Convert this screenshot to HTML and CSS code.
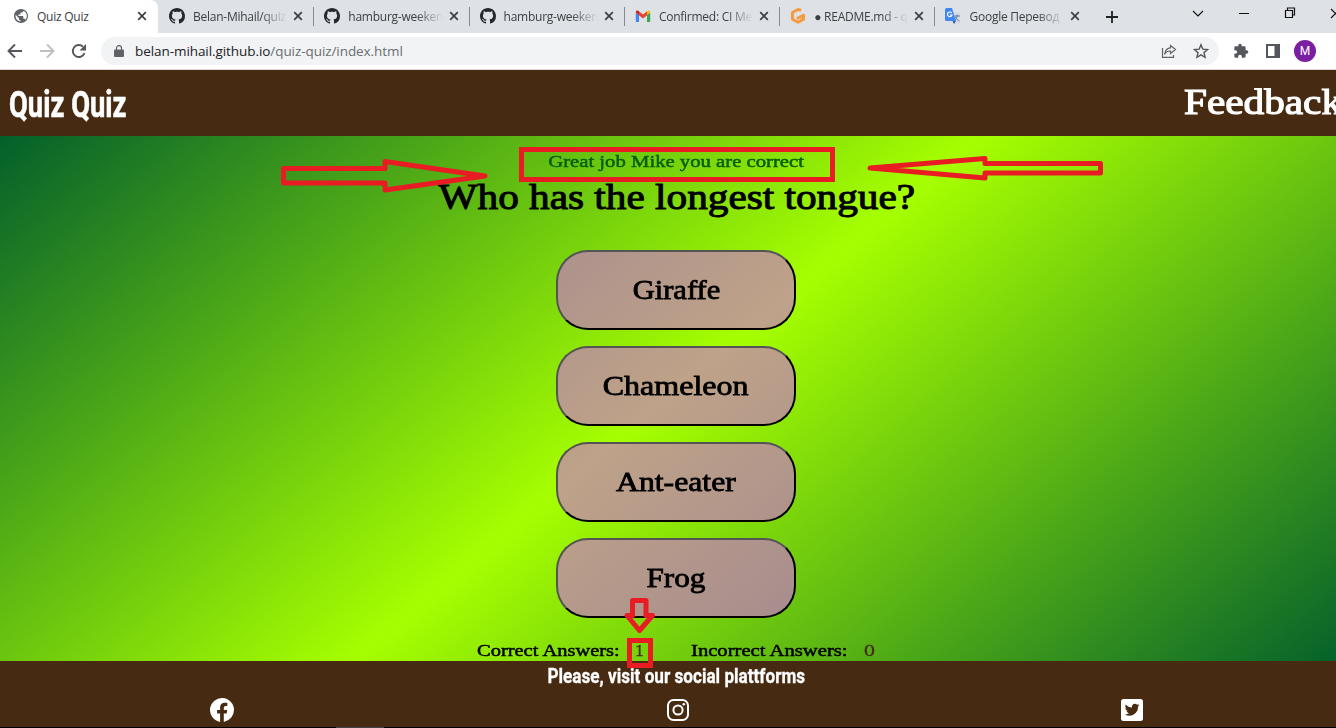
FILE: index.html
```
<!DOCTYPE html>
<html lang="en">
<head>
<meta charset="utf-8">
<title>Quiz Quiz</title>
<link rel="stylesheet" href="styles.css">
</head>
<body>
<svg class="defs" width="0" height="0" aria-hidden="true">
  <symbol id="github" viewBox="0 0 16 16"><path fill="#24292f" d="M8 0C3.58 0 0 3.58 0 8c0 3.54 2.29 6.53 5.47 7.59.4.07.55-.17.55-.38 0-.19-.01-.82-.01-1.49-2.01.37-2.53-.49-2.69-.94-.09-.23-.48-.94-.82-1.13-.28-.15-.68-.52-.01-.53.63-.01 1.08.58 1.23.82.72 1.21 1.87.87 2.33.66.07-.52.28-.87.51-1.07-1.78-.2-3.64-.89-3.64-3.95 0-.87.31-1.59.82-2.15-.08-.2-.36-1.02.08-2.12 0 0 .67-.21 2.2.82.64-.18 1.32-.27 2-.27s1.36.09 2 .27c1.53-1.04 2.2-.82 2.2-.82.44 1.1.16 1.92.08 2.12.51.56.82 1.27.82 2.15 0 3.07-1.87 3.75-3.65 3.95.29.25.54.73.54 1.48 0 1.07-.01 1.93-.01 2.2 0 .21.15.46.55.38A8.01 8.01 0 0 0 16 8c0-4.42-3.58-8-8-8z"/></symbol>
  <symbol id="close" viewBox="0 0 10 10"><path d="M1.2 1.2l7.6 7.6M8.8 1.2L1.2 8.8" stroke="#3c4043" stroke-width="1.7"/></symbol>
</svg>

<div class="browser">
  <div class="tabs">
    <div class="tab active">
      <svg class="fav" viewBox="0 0 24 24"><path fill="#5f6368" d="M12 0C5.4 0 0 5.4 0 12s5.400 12 12 12 12-5.400 12-12S18.600 0 12 0zM11 21.400C6.200 20.800 2.600 16.800 2.600 12l.2-2 5.700 5.700V17c0 1.300 1.100 2.400 2.500 2.400zm8.500-3c-.3-1-1.200-1.700-2.300-1.700H16v-3.500c0-.7-.5-1.200-1.200-1.200H7.500V9.600H10c.7 0 1.200-.5 1.200-1.200V6h2.500C15 6 16 5 16 3.600v-.5c3.500 1.400 6 4.900 6 8.900 0 2.500-1 4.800-2.500 6.400z"/></svg>
      <span class="title">Quiz Quiz</span><svg class="x"><use href="#close"/></svg>
    </div>
    <div class="tab"><svg class="fav"><use href="#github"/></svg><span class="title">Belan-Mihail/quiz</span><svg class="x"><use href="#close"/></svg></div>
    <div class="tab"><svg class="fav"><use href="#github"/></svg><span class="title">hamburg-weeken</span><svg class="x"><use href="#close"/></svg></div>
    <div class="tab"><svg class="fav"><use href="#github"/></svg><span class="title">hamburg-weeken</span><svg class="x"><use href="#close"/></svg></div>
    <div class="tab">
      <svg class="fav" viewBox="0 0 16 16"><path fill="#4285f4" d="M1 14h3V7L.8 4.500V13z"/><path fill="#34a853" d="M12 14h3l.2-1V4.500L12 7z"/><path fill="#ea4335" d="M3.500 3L8 6.500 12.500 3v4L8 10.400 3.500 7z"/><path fill="#c5221f" d="M.8 4.500C.8 2.500 2.500 2 4 3.300V7L.8 4.600z"/><path fill="#fbbc04" d="M15.200 4.500c0-2-1.700-2.500-3.200-1.200V7l3.200-2.400z"/></svg>
      <span class="title">Confirmed: CI Me</span><svg class="x"><use href="#close"/></svg>
    </div>
    <div class="tab">
      <svg class="fav" viewBox="0 0 16 16"><path d="M10 2L8 1.500 2.500 4.500v6.700L8 14.300l5.500-3.100V7.300L8 10" fill="none" stroke="#f7993c" stroke-width="3" stroke-linejoin="round" stroke-linecap="round"/></svg>
      <span class="title">● README.md - q</span><svg class="x"><use href="#close"/></svg>
    </div>
    <div class="tab">
      <svg class="fav" viewBox="0 0 16 16"><path fill="#d8dadf" d="M7 4h8v12H9z"/><path d="M9.500 8h5.500M12 6.500V8c0 2-1 4-2.500 5M10.500 9c1 2 2.500 3.500 4 4" stroke="#657ba0" fill="none"/><path fill="#4285f4" d="M0 1.500Q0 0 1.500 0H7l4 13H1.500Q0 13 0 11.500z"/><path fill="#3459b5" d="M7.500 13H11l-2 3z"/><path d="M6.700 5A2.300 2.300 0 1 0 7 7H5" stroke="#fff" stroke-width="1.200" fill="none"/></svg>
      <span class="title">Google Перевод</span><svg class="x"><use href="#close"/></svg>
    </div>
    <svg class="plus" viewBox="0 0 12 12"><path d="M6 0v12M0 6h12" stroke="#202124" stroke-width="1.800"/></svg>
    <svg class="window-controls" viewBox="0 0 150 26" fill="none" stroke="#111" stroke-width="1.200"><path d="M7 11l5 5 5-5M53 13.500h10M99.500 10.500h7v7h-7zM101.500 10v-2h7v7h-2M145 9l9 9M145 18l9-9"/></svg>
  </div>
  <div class="toolbar">
    <svg class="nav" viewBox="0 0 100 36" fill="none" stroke="#54575b" stroke-width="1.900"><path d="M22 18H9M15 11.500L8.500 18l6.500 6.500"/><path stroke="#bdbfc2" d="M40 18h13M47 11.500l6.500 6.500-6.500 6.500"/><path d="M84.500 20A6 6 0 1 1 83 13.700"/><path fill="#54575b" stroke="none" d="M86 11v6.500h-6.500z"/></svg>
    <div class="address">
      <svg class="lock" viewBox="0 0 10 12"><path fill="#5f6368" d="M1 4.500h8q1 0 1 1V11q0 1-1 1H1q-1 0-1-1V5.500q0-1 1-1z"/><path d="M2.500 5V3a2.500 2.300 0 0 1 5 0v2" fill="none" stroke="#5f6368" stroke-width="1.200"/></svg>
      <span class="url"><b>belan-mihail.github.io</b>/quiz-quiz/index.html</span>
      <svg class="share" viewBox="0 0 16 16" fill="none" stroke="#5f6368" stroke-width="1.200"><path d="M1.500 5v9.400h11V12M9.500 2.500L14.500 6.500 9.500 10.500V8C6.500 8 4.500 9 3.500 11.500 4 7.500 6 5 9.500 4.800z"/></svg>
      <svg class="star" viewBox="0 0 16 16" fill="none" stroke="#54575b" stroke-width="1.400"><path d="M8 1.700l1.800 4.400 4.800.4-3.600 3.100 1.100 4.700L8 11.800l-4.100 2.500L5 9.600 1.400 6.500l4.800-.4z"/></svg>
    </div>
    <svg class="puzzle" viewBox="0 0 24 24"><path fill="#54575b" d="M20.500 11H19V7a2 2 0 0 0-2-2h-4V3.500a2.500 2.500 0 0 0-5 0V5H4a2 2 0 0 0-2 2v3.800h1.500a2.700 2.700 0 0 1 0 5.400H2V20a2 2 0 0 0 2 2h3.800v-1.500a2.700 2.700 0 0 1 5.400 0V22H17a2 2 0 0 0 2-2v-4h1.500a2.500 2.500 0 0 0 0-5z"/></svg>
    <svg class="panel" viewBox="0 0 14 14"><path fill="#54575b" fill-rule="evenodd" d="M0 0h14v14H0zM2 2v10h6.500V2z"/></svg>
    <span class="avatar">M</span>
  </div>
</div>

<header class="header">
  <h1 class="logo">Quiz Quiz</h1>
  <a class="feedback">Feedback</a>
</header>

<main class="quiz">
  <p class="message"><span>Great job Mike you are correct</span></p>
  <h2 class="question"><span>Who has the longest tongue?</span></h2>
  <div class="answers">
    <button class="answer"><span class="giraffe">Giraffe</span></button>
    <button class="answer"><span class="chameleon">Chameleon</span></button>
    <button class="answer"><span class="anteater">Ant-eater</span></button>
    <button class="answer"><span class="frog">Frog</span></button>
  </div>
  <div class="scores">
    <span class="label correct">Correct Answers:</span><span class="score">1</span>
    <span class="label incorrect">Incorrect Answers:</span><span class="score last">0</span>
  </div>
</main>

<footer class="footer">
  <p class="visit"><span>Please, visit our social plattforms</span></p>
  <div class="social">
    <svg width="24" height="24" viewBox="0 0 24 24"><path fill="#fff" d="M24 12a12 12 0 1 0-13.900 11.900v-8.400h-3V12h3V9.400c0-3 1.800-4.700 4.500-4.700 1.300 0 2.700.2 2.700.2v3h-1.500c-1.500 0-2 .9-2 1.900V12h3.400l-.5 3.500h-2.900v8.400A12 12 0 0 0 24 12z"/></svg>
    <svg width="22" height="22" viewBox="0 0 22 22" fill="none" stroke="#fff"><rect x="1" y="1" width="20" height="20" rx="5.500" stroke-width="2"/><circle cx="11" cy="11" r="4.600" stroke-width="2"/><circle cx="16.800" cy="5.300" r="1.300" fill="#fff" stroke="none"/></svg>
    <svg width="22" height="22" viewBox="0 0 22 22"><rect width="22" height="22" rx="2.500" fill="#fff"/><path fill="#472a12" d="M18.500 6.200c-.5.3-1.100.4-1.700.5.600-.4 1-.9 1.300-1.600-.6.300-1.200.6-1.900.7a3 3 0 0 0-5.200 2.700C8.500 8.400 6.300 7.200 4.800 5.400a3 3 0 0 0 .9 4c-.5 0-.9-.1-1.300-.4 0 1.500 1 2.700 2.400 3-.4.100-.9.100-1.300 0 .4 1.200 1.500 2 2.800 2.100a6 6 0 0 1-4.500 1.300A8.600 8.600 0 0 0 17 7.800c.6-.4 1.100-1 1.500-1.600z"/></svg>
  </div>
  <div class="taskbar"></div>
</footer>

<svg class="marks" viewBox="0 0 1336 728" fill="none" stroke="#e91c24" stroke-width="5" stroke-linejoin="round">
  <path d="M283.500 168.500H385V161.500L485 176 385 190v-7H283.500z"/>
  <path d="M870 168l115-9.500v5h115.500v9.500H985v5z"/>
  <path stroke-linejoin="miter" d="M521.500 149.500h311v30h-311z"/>
  <path stroke-linejoin="miter" d="M629.500 640.500h21v25h-21z"/>
  <path d="M632.500 600.500h13.500v15h6.500L639.500 630.500 627 615.500h5.500z"/>
</svg>
</body>
</html>
```
FILE: styles.css
```
* { box-sizing: border-box; }
body { margin: 0; width: 1336px; height: 728px; overflow: hidden; position: relative; font-family: "Liberation Serif", serif; }
p, h1, h2 { margin: 0; }
svg { flex: none; display: block; }
.defs { position: absolute; }

.browser { height: 70px; font-family: "Open Sans", sans-serif; border-bottom: 1px solid #dcd5d4; background: #fff; }
.tabs { height: 33px; background: #dee1e6; display: flex; align-items: center; }
.tab { width: 155.300px; height: 33px; padding: 0 10px 1px 11px; display: flex; align-items: center; position: relative; }
.tab + .tab:not(:nth-child(2))::before { content: ""; position: absolute; left: 0; top: 7px; width: 1px; height: 19px; background: #85888d; }
.active { width: 158px; padding-left: 14px; padding-right: 11px; background: #fff; border-radius: 0 8px 0 0; }
.fav { width: 16px; height: 16px; }
.active .fav { width: 14px; height: 14px; }
.title { flex: 1; min-width: 0; margin: 0 4px 0 8px; overflow: hidden; white-space: nowrap; font-size: 12px; letter-spacing: -0.25px; color: #3c4043; mask-image: linear-gradient(90deg, #000 70%, transparent 98%); }
.active .title { margin-left: 9px; mask-image: none; }
.x { width: 10px; height: 10px; }
.plus { width: 12px; height: 12px; margin-left: 16px; }
.window-controls { width: 150px; height: 26px; margin-left: auto; margin-bottom: 7px; overflow: hidden; }
.toolbar { height: 36px; display: flex; align-items: center; }
.nav { width: 100px; height: 36px; }
.address { width: 1118px; height: 28px; margin-left: 1px; padding: 0 10px 0 13px; border-radius: 14px; background: #f1f3f4; display: flex; align-items: center; }
.lock { width: 10px; height: 12px; }
.url { flex: 1; margin-left: 11px; font-size: 13.500px; letter-spacing: -0.07px; color: #6b6e72; }
.url b { font-weight: 400; color: #202124; }
.share { width: 16px; height: 16px; margin-right: 16px; }
.star { width: 16px; height: 16px; }
.puzzle { width: 16px; height: 16px; margin-left: 14px; }
.panel { width: 14px; height: 14px; margin-left: 17px; }
.avatar { width: 22px; height: 22px; margin-left: 14px; border-radius: 50%; background: #7b1fa2; color: #fff; text-align: center; font: 12px/22px Roboto, sans-serif; }

.header { height: 66px; padding-left: 9px; background: #472a12; color: #fff; display: flex; justify-content: space-between; }
.logo { font: 700 36px/70px Roboto, sans-serif; -webkit-text-stroke: 0.6px; transform: scaleX(0.76); transform-origin: left; }
.feedback { width: 152px; font-size: 36.500px; line-height: 64px; -webkit-text-stroke: 1.2px; transform: scaleX(1.13); transform-origin: left; }

.quiz { width: 1352px; height: 525px; padding-top: 14px; background: linear-gradient(140deg, #03602b, #a6ff00 49.500%, #03602b); display: flex; flex-direction: column; align-items: center; }
.quiz > * { flex: none; }
.message { height: 24px; font-size: 17.500px; line-height: 23px; color: #06600a; -webkit-text-stroke: 0.5px; }
.message span { display: inline-block; transform: scaleX(1.183); }
.question { height: 76px; font-size: 36.500px; font-weight: 400; line-height: 46px; -webkit-text-stroke: 1px; }
.question span { display: inline-block; transform: translateX(1px) scaleX(1.13); }
.answers { display: flex; flex-direction: column; gap: 16px; }
.answer { width: 240px; height: 80px; padding: 0; border: 2px outset #000; border-radius: 32px; background: rgba(203, 112, 211, .65); color: #000; font: 27.500px "Liberation Serif", serif; -webkit-text-stroke: 0.8px; }
.answer span { display: inline-block; }
.giraffe { transform: scaleX(1.11); }
.chameleon { transform: scaleX(1.165); }
.anteater { transform: scaleX(1.155); }
.frog { transform: scaleX(1.135); }
.scores { align-self: flex-start; margin: 22px 0 0 477px; display: flex; font-size: 17.500px; line-height: 21px; -webkit-text-stroke: 0.5px; }
.label { width: 142px; white-space: nowrap; transform-origin: left; }
.correct { transform: scaleX(1.17); }
.incorrect { width: 156px; margin-left: 47px; transform: scaleX(1.18); }
.score { width: 9px; margin-left: 16px; color: #472a12; -webkit-text-stroke: 0.3px; }
.last { margin-left: 18px; transform: scaleX(1.25); }

.footer { height: 67px; width: 1352px; background: #472a12; color: #fff; display: flex; flex-direction: column; }
.visit { height: 34px; text-align: center; font: 700 20px/31px Roboto, sans-serif; -webkit-text-stroke: 0.3px; }
.visit span { display: inline-block; transform: scaleX(0.857); }
.social { height: 32px; padding: 0 209px 3px 210px; display: flex; justify-content: space-between; align-items: center; }
.taskbar { height: 1px; background: linear-gradient(90deg, #000 336px, #444 336px 384px, #000 384px); }
.marks { position: absolute; left: 0; top: 0; width: 1336px; height: 728px; pointer-events: none; }
```
